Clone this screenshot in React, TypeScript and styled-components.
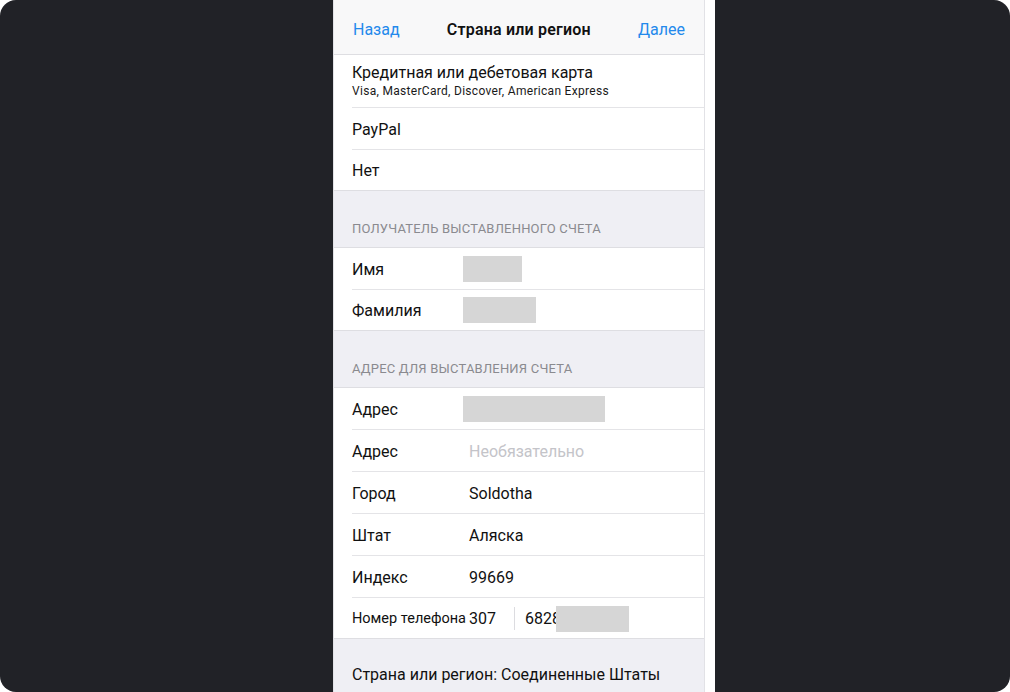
import React from 'react';
import styled, { createGlobalStyle } from 'styled-components';

const GlobalStyle = createGlobalStyle`
    html, body {
        margin: 0;
        padding: 0;
        background: #ffffff;
    }
    * {
        box-sizing: border-box;
    }
`;

interface FieldRow {
    label: string;
    value?: string;
    placeholder?: string;
    redact?: number;
}

const payee: FieldRow[] = [
    { label: 'Имя', redact: 59 },
    { label: 'Фамилия', redact: 73 },
];

const address: FieldRow[] = [
    { label: 'Адрес', redact: 142 },
    { label: 'Адрес', placeholder: 'Необязательно' },
    { label: 'Город', value: 'Soldotha' },
    { label: 'Штат', value: 'Аляска' },
    { label: 'Индекс', value: '99669' },
];

const Field: React.FC<{ row: FieldRow }> = ({ row }) => (
    <Row>
        <Label>{row.label}</Label>
        {row.redact && <Redact width={row.redact} />}
        {row.value && <Value>{row.value}</Value>}
        {row.placeholder && <Placeholder>{row.placeholder}</Placeholder>}
    </Row>
);

export default function App() {
    return (
        <>
            <GlobalStyle />
            <Frame>
                <Screen>
                    <Content>
                        <NavBar>
                            <NavButton>Назад</NavButton>
                            <NavTitle>Страна или регион</NavTitle>
                            <NavButton>Далее</NavButton>
                        </NavBar>

                        <Group noTop>
                            <Row tall>
                                <CardText>
                                    <Label>Кредитная или дебетовая карта</Label>
                                    <Sub>Visa, MasterCard, Discover, American Express</Sub>
                                </CardText>
                            </Row>
                            <Row>
                                <Label>PayPal</Label>
                            </Row>
                            <Row>
                                <Label>Нет</Label>
                            </Row>
                        </Group>

                        <SectionHeader>Получатель выставленного счета</SectionHeader>
                        <Group>
                            {payee.map((r, i) => <Field key={i} row={r} />)}
                        </Group>

                        <SectionHeader>Адрес для выставления счета</SectionHeader>
                        <Group>
                            {address.map((r, i) => <Field key={i} row={r} />)}
                            <Row>
                                <PhoneLabel>Номер телефона</PhoneLabel>
                                <AreaCode>307</AreaCode>
                                <Divider />
                                <PhoneNumber>
                                    6828
                                    <PhoneRedact />
                                </PhoneNumber>
                            </Row>
                        </Group>

                        <Footer>Страна или регион: Соединенные Штаты</Footer>
                    </Content>
                </Screen>
            </Frame>
        </>
    );
}

const Frame = styled.div`
    width: 1010px;
    height: 692px;
    background: #212227;
    border-radius: 16px;
    overflow: hidden;
    display: grid;
    grid-template-columns: 333px 382px 1fr;
`;

const Screen = styled.div`
    grid-column: 2;
    background: #ffffff;
    height: 692px;
    padding-right: 10px;
    font-family: Roboto, "Noto Sans", sans-serif;
    color: #111111;
`;

const Content = styled.div`
    height: 100%;
    background: #efeff4;
    border-left: 1px solid #e2e2e6;
    border-right: 1px solid #e2e2e6;
    display: flex;
    flex-direction: column;
`;

const NavBar = styled.div`
    height: 55px;
    flex-shrink: 0;
    background: #f8f8f9;
    border-bottom: 1px solid #dedee2;
    display: flex;
    align-items: center;
    justify-content: space-between;
    padding: 4px 19px 0 19px;
`;

const NavButton = styled.span`
    color: #2389ec;
    font-size: 16px;
`;

const NavTitle = styled.span`
    font-size: 16px;
    font-weight: 600;
    letter-spacing: 0.2px;
    color: #111111;
`;

const Group = styled.div<{ noTop?: boolean }>`
    background: #ffffff;
    border-top: ${(p) => (p.noTop ? 'none' : '1px solid #dedee2')};
    border-bottom: 1px solid #dedee2;
    flex-shrink: 0;
`;

const Row = styled.div<{ tall?: boolean }>`
    position: relative;
    height: ${(p) => (p.tall ? '53px' : '42px')};
    display: flex;
    align-items: center;
    padding-left: 18px;
    padding-top: 1px;
    &::after {
        content: '';
        position: absolute;
        left: 18px;
        right: 0;
        bottom: 0;
        height: 1px;
        background: #e4e4e7;
    }
    &:last-child {
        height: 40px;
    }
    &:last-child::after {
        display: none;
    }
`;

const CardText = styled.div`
    display: flex;
    flex-direction: column;
    gap: 2px;
    margin-top: -3px;
`;

const Label = styled.span`
    font-size: 16px;
    width: 117px;
    white-space: nowrap;
`;

const Sub = styled.span`
    font-size: 12px;
    letter-spacing: 0.3px;
    color: #1a1a1a;
`;

const Value = styled.span`
    font-size: 16px;
`;

const Placeholder = styled.span`
    font-size: 16px;
    color: #c4c4c9;
`;

const Redact = styled.div<{ width: number }>`
    width: ${(p) => p.width}px;
    height: 26px;
    margin: -2px 0 0 -6px;
    background: #d6d6d6;
`;

const PhoneLabel = styled.span`
    font-size: 14.5px;
    width: 117px;
    white-space: nowrap;
`;

const AreaCode = styled.span`
    font-size: 16px;
    width: 45px;
`;

const Divider = styled.div`
    width: 1px;
    height: 23px;
    background: #dcdce0;
    margin-right: 10px;
`;

const PhoneNumber = styled.span`
    position: relative;
    font-size: 16px;
`;

const PhoneRedact = styled.span`
    position: absolute;
    left: 31px;
    top: -3px;
    width: 73px;
    height: 26px;
    background: #d6d6d6;
`;

const SectionHeader = styled.div`
    height: 56px;
    flex-shrink: 0;
    display: flex;
    align-items: flex-end;
    padding: 0 0 10px 18px;
    font-size: 13px;
    line-height: 16px;
    text-transform: uppercase;
    color: #8a8a8f;
    letter-spacing: 0.2px;
`;

const Footer = styled.div`
    padding: 26px 0 0 18px;
    font-size: 16px;
    color: #111111;
`;
